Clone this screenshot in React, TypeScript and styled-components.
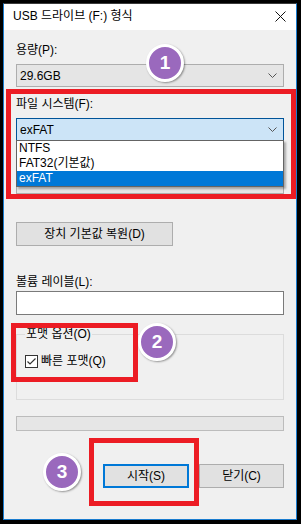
import React from 'react';
import styled, { createGlobalStyle } from 'styled-components';

const GlobalStyle = createGlobalStyle`
  html, body {
    margin: 0;
    padding: 0;
    background: #000;
  }
  body {
    font-family: "Liberation Sans", "Noto Sans CJK KR", sans-serif;
    font-size: 12px;
    color: #000;
  }
`;

function Chevron() {
  return (
    <ChevronIcon width="9" height="6" viewBox="0 0 9 6">
      <polyline points="0.5,0.5 4.5,4.5 8.5,0.5" fill="none" stroke="#555" strokeWidth="1" />
    </ChevronIcon>
  );
}

function App() {
  return (
    <>
      <GlobalStyle />
      <Screen>
        <Window>
          <TitleBar>
            <Title>USB 드라이브 (F:) 형식</Title>
            <CloseIcon width="11" height="11" viewBox="0 0 11 11">
              <path d="M0.5 0.5 L10.5 10.5 M10.5 0.5 L0.5 10.5" stroke="#111" strokeWidth="1" />
            </CloseIcon>
          </TitleBar>
          <Body>
            <Label $top={12}>용량(P):</Label>
            <Combo $top={6}>
              29.6GB
              <Chevron />
            </Combo>

            <Label $top={9}>파일 시스템(F):</Label>
            <Combo $top={6} $active>
              exFAT
              <Chevron />
              <DropList>
                <Option>NTFS</Option>
                <Option>FAT32(기본값)</Option>
                <Option $selected>exFAT</Option>
              </DropList>
            </Combo>

            {/* cluster size row, hidden under the open list */}
            <Label $top={8} />
            <Combo $top={6}>
              <span />
              <Chevron />
            </Combo>

            <Button $top={28} $width={157}>장치 기본값 복원(D)</Button>

            <Label $top={28}>볼륨 레이블(L):</Label>
            <TextField $top={1} />

            <GroupBox>
              <Legend>포맷 옵션(O)</Legend>
              <CheckRow>
                <CheckBox>
                  <svg width="11" height="11" viewBox="0 0 11 11">
                    <polyline points="1.5,5.5 4,8 9.5,2.5" fill="none" stroke="#333" strokeWidth="1.2" />
                  </svg>
                </CheckBox>
                빠른 포맷(Q)
              </CheckRow>
            </GroupBox>

            <Progress />

            <ButtonRow>
              <Button $width={86} $primary>시작(S)</Button>
              <Button $width={85}>닫기(C)</Button>
            </ButtonRow>
          </Body>
        </Window>

        <Highlight $x={6} $y={89} $w={290} $h={110} />
        <Highlight $x={11} $y={323} $w={127} $h={59} />
        <Highlight $x={89} $y={438} $w={110} $h={68} />

        <Badge $x={146} $y={44}>1</Badge>
        <Badge $x={138} $y={323}>2</Badge>
        <Badge $x={43} $y={453}>3</Badge>
      </Screen>
    </>
  );
}

const Screen = styled.div`
  position: relative;
  width: 301px;
  height: 524px;
  box-sizing: border-box;
  padding: 3px 4px 4px 3px;
  background: #000;
  overflow: hidden;
`;

const Window = styled.div`
  height: 517px;
  box-sizing: border-box;
  border: 1px solid #1a7ccf;
  border-top-color: #3a3a3a;
  background: #f0f0f0;
  display: flex;
  flex-direction: column;
`;

const TitleBar = styled.div`
  height: 26px;
  background: #fff;
  display: flex;
  align-items: center;
  justify-content: space-between;
  padding: 0 10px 2px 9px;
  box-sizing: border-box;
`;

const Title = styled.span`
  font-size: 12px;
  line-height: 16px;
`;

const CloseIcon = styled.svg`
  display: block;
`;

const Body = styled.div`
  display: flex;
  flex-direction: column;
  padding: 0 12px;
`;

const Label = styled.div<{ $top: number }>`
  margin-top: ${p => p.$top}px;
  height: 16px;
  line-height: 16px;
`;

const Combo = styled.div<{ $top: number; $active?: boolean }>`
  position: relative;
  margin-top: ${p => p.$top}px;
  height: 23px;
  box-sizing: border-box;
  border: 1px solid ${p => (p.$active ? '#005499' : '#adadad')};
  background: ${p => (p.$active ? '#cce4f7' : '#e5e5e5')};
  padding: 0 6px 0 3px;
  display: flex;
  align-items: center;
  justify-content: space-between;
  line-height: 16px;
`;

const ChevronIcon = styled.svg`
  display: block;
`;

const DropList = styled.div`
  position: absolute;
  z-index: 2;
  top: 100%;
  left: -1px;
  right: -1px;
  border: 1px solid #646464;
  background: #fff;
  box-shadow: 2px 2px 2px rgba(0, 0, 0, 0.3);
`;

const Option = styled.div<{ $selected?: boolean }>`
  height: 15px;
  line-height: 15px;
  padding-left: 2px;
  background: ${p => (p.$selected ? '#0078d7' : '#fff')};
  color: ${p => (p.$selected ? '#fff' : '#000')};
`;

const Button = styled.div<{ $top?: number; $width: number; $primary?: boolean }>`
  margin-top: ${p => p.$top ?? 0}px;
  width: ${p => p.$width}px;
  height: 24px;
  box-sizing: border-box;
  border: ${p => (p.$primary ? '2px solid #0078d7' : '1px solid #adadad')};
  background: #e1e1e1;
  display: flex;
  align-items: center;
  justify-content: center;
  line-height: 16px;
`;

const TextField = styled.div<{ $top: number }>`
  margin-top: ${p => p.$top}px;
  height: 24px;
  box-sizing: border-box;
  border: 1px solid #7a7a7a;
  background: #fff;
`;

const GroupBox = styled.fieldset`
  margin: 11px 0 0;
  padding: 0 8px 30px;
  border: 1px solid #dcdcdc;
  min-width: 0;
`;

const Legend = styled.legend`
  padding: 0 1px;
  line-height: 16px;
`;

const CheckRow = styled.div`
  margin-top: 11px;
  height: 16px;
  display: flex;
  align-items: center;
  line-height: 16px;
`;

const CheckBox = styled.span`
  width: 13px;
  height: 13px;
  box-sizing: border-box;
  border: 1px solid #333;
  background: #fff;
  margin-right: 3px;
  display: flex;
  align-items: center;
  justify-content: center;
`;

const Progress = styled.div`
  margin-top: 16px;
  height: 15px;
  box-sizing: border-box;
  border: 1px solid #bcbcbc;
  background: #e6e6e6;
`;

const ButtonRow = styled.div`
  margin-top: 33px;
  display: flex;
  justify-content: flex-end;
  gap: 10px;
`;

const Highlight = styled.div<{ $x: number; $y: number; $w: number; $h: number }>`
  position: absolute;
  left: ${p => p.$x}px;
  top: ${p => p.$y}px;
  width: ${p => p.$w}px;
  height: ${p => p.$h}px;
  box-sizing: border-box;
  border: 5px solid #ec1c24;
  pointer-events: none;
`;

const Badge = styled.div<{ $x: number; $y: number }>`
  position: absolute;
  left: ${p => p.$x}px;
  top: ${p => p.$y}px;
  width: 32px;
  height: 32px;
  border-radius: 50%;
  border: 3px solid #fff;
  background: #9a69bd;
  box-shadow: 1px 1px 2px rgba(0, 0, 0, 0.4);
  color: #fff;
  font: bold 19px "Liberation Sans", sans-serif;
  display: flex;
  align-items: center;
  justify-content: center;
`;

export default App;
